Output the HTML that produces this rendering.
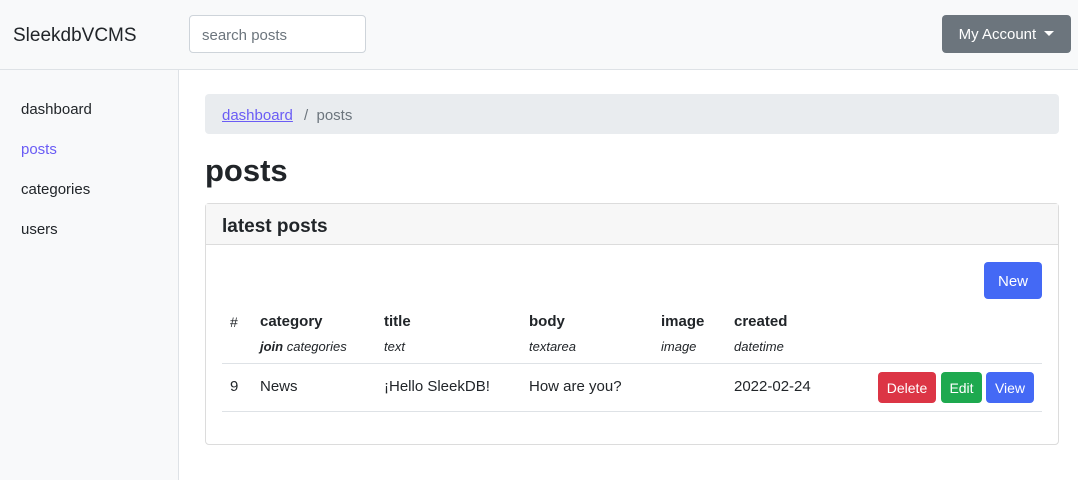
<!DOCTYPE html>
<html><head><style>
*{box-sizing:border-box;margin:0;padding:0}
body{width:1078px;height:480px;overflow:hidden;font-family:"Liberation Sans",sans-serif;color:#212529;background:#fff;position:relative;font-size:15px}
.a{position:absolute;white-space:nowrap}
.btn{position:absolute;color:#fff;border-radius:4px;text-align:center;font-size:14px}
</style></head><body>
<div class="a" style="left:0;top:0;width:1078px;height:70px;background:#f8f9fa;border-bottom:1px solid #dee2e6"></div>
<div class="a" style="left:13px;top:25px;font-size:19px">SleekdbVCMS</div>
<div class="a" style="left:189px;top:15px;width:177px;height:38px;background:#fff;border:1px solid #ced4da;border-radius:4px;padding:11px 12px;color:#6c757d;font-size:15px">search posts</div>
<div class="btn" style="left:942px;top:15px;width:129px;height:38px;background:#6c757d;font-size:15px;line-height:40px">My Account <span style="display:inline-block;border-left:5px solid transparent;border-right:5px solid transparent;border-top:5px solid #fff;vertical-align:3px;margin-left:4px"></span></div>
<div class="a" style="left:0;top:70px;width:179px;height:410px;background:#f8f9fa;border-right:1px solid #dee2e6"></div>
<div class="a" style="left:21px;top:101px">dashboard</div>
<div class="a" style="left:21px;top:141px;color:#6a5cf5">posts</div>
<div class="a" style="left:21px;top:181px">categories</div>
<div class="a" style="left:21px;top:221px">users</div>
<div class="a" style="left:205px;top:94px;width:854px;height:40px;background:#e9ecef;border-radius:4px"></div>
<div class="a" style="left:222px;top:107px;color:#6a5cf5;text-decoration:underline">dashboard</div>
<div class="a" style="left:304px;top:107px;color:#6c757d">/&nbsp;&nbsp;posts</div>
<div class="a" style="left:205px;top:153px;font-size:31px;font-weight:bold">posts</div>
<div class="a" style="left:205px;top:203px;width:854px;height:242px;border:1px solid #dcdcdc;border-radius:4px"></div>
<div class="a" style="left:206px;top:204px;width:852px;height:41px;background:#f7f7f7;border-bottom:1px solid #dcdcdc"></div>
<div class="a" style="left:222px;top:216px;font-size:19px;font-weight:bold">latest posts</div>
<div class="btn" style="left:984px;top:262px;width:58px;height:37px;background:#4469f5;line-height:39px;font-size:15px">New</div>
<div class="a" style="left:230px;top:314px;font-size:14px">#</div>
<div class="a" style="left:260px;top:313px;font-weight:bold">category</div>
<div class="a" style="left:384px;top:313px;font-weight:bold">title</div>
<div class="a" style="left:529px;top:313px;font-weight:bold">body</div>
<div class="a" style="left:661px;top:313px;font-weight:bold">image</div>
<div class="a" style="left:734px;top:313px;font-weight:bold">created</div>
<div class="a" style="left:260px;top:339px;font-size:13px;font-style:italic"><b>join</b> categories</div>
<div class="a" style="left:384px;top:339px;font-size:13px;font-style:italic">text</div>
<div class="a" style="left:529px;top:339px;font-size:13px;font-style:italic">textarea</div>
<div class="a" style="left:661px;top:339px;font-size:13px;font-style:italic">image</div>
<div class="a" style="left:734px;top:339px;font-size:13px;font-style:italic">datetime</div>
<div class="a" style="left:222px;top:363px;width:820px;border-top:1px solid #dee2e6"></div>
<div class="a" style="left:230px;top:378px">9</div>
<div class="a" style="left:260px;top:378px">News</div>
<div class="a" style="left:384px;top:378px">¡Hello SleekDB!</div>
<div class="a" style="left:529px;top:378px">How are you?</div>
<div class="a" style="left:734px;top:378px">2022-02-24</div>
<div class="btn" style="left:878px;top:372px;width:58px;height:31px;background:#dc3545;line-height:33px">Delete</div>
<div class="btn" style="left:941px;top:372px;width:41px;height:31px;background:#1ea94f;line-height:33px">Edit</div>
<div class="btn" style="left:986px;top:372px;width:48px;height:31px;background:#4469f5;line-height:33px">View</div>
<div class="a" style="left:222px;top:411px;width:820px;border-top:1px solid #dee2e6"></div>
</body></html>
